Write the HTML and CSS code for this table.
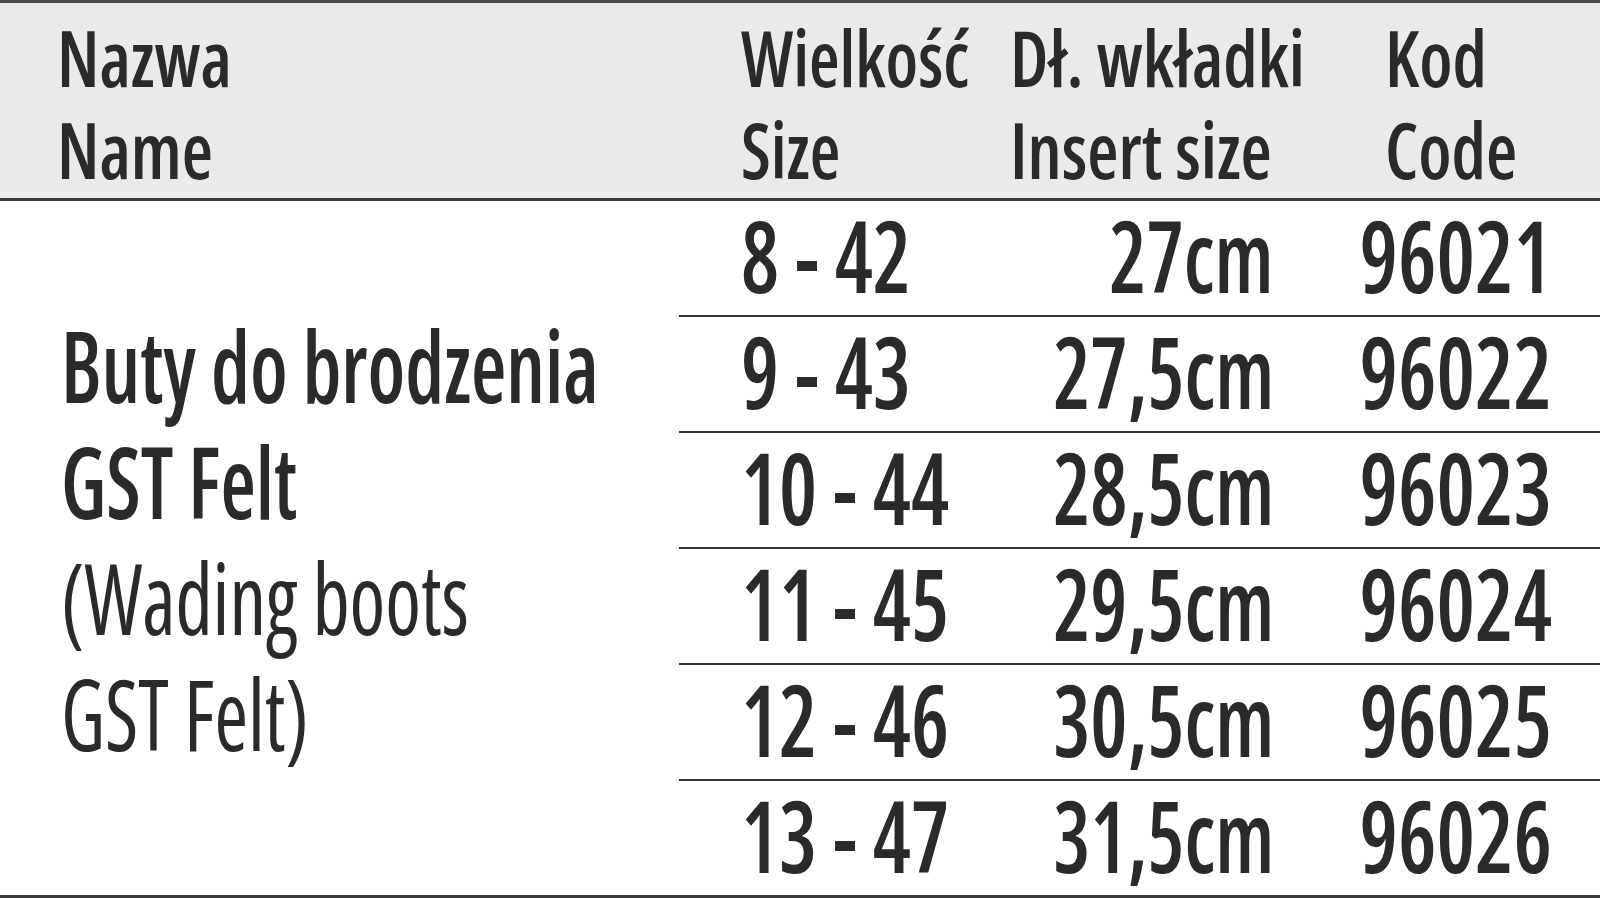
FILE: index.html
```html
<!DOCTYPE html>
<html lang="pl">
<head>
<meta charset="utf-8">
<title>Buty do brodzenia GST Felt</title>
<link rel="stylesheet" href="styles.css">
</head>
<body>
<div class="sheet">
  <div class="head">
    <div class="hc hc-name"><span class="sq">Nazwa</span><span class="sq">Name</span></div>
    <div class="hc hc-size"><span class="sq">Wielkość</span><span class="sq">Size</span></div>
    <div class="hc hc-ins"><span class="sq">Dł. wkładki</span><span class="sq">Insert size</span></div>
    <div class="hc hc-code"><span class="sq">Kod</span><span class="sq">Code</span></div>
  </div>
  <div class="rows">
    <div class="namecell">
      <span class="nl bold"><span class="sq">Buty do brodzenia</span></span>
      <span class="nl bold"><span class="sq">GST Felt</span></span>
      <span class="nl light"><span class="sq">(Wading boots</span></span>
      <span class="nl light"><span class="sq">GST Felt)</span></span>
    </div>

    <div class="c size"><span class="sq">8 - 42</span></div>
    <div class="c ins"><span class="sq">27cm</span></div>
    <div class="c code"><span class="sq">96021</span></div>

    <div class="c size"><span class="sq">9 - 43</span></div>
    <div class="c ins"><span class="sq">27,5cm</span></div>
    <div class="c code"><span class="sq">96022</span></div>

    <div class="c size"><span class="sq">10 - 44</span></div>
    <div class="c ins"><span class="sq">28,5cm</span></div>
    <div class="c code"><span class="sq">96023</span></div>

    <div class="c size"><span class="sq">11 - 45</span></div>
    <div class="c ins"><span class="sq">29,5cm</span></div>
    <div class="c code"><span class="sq">96024</span></div>

    <div class="c size"><span class="sq">12 - 46</span></div>
    <div class="c ins"><span class="sq">30,5cm</span></div>
    <div class="c code"><span class="sq">96025</span></div>

    <div class="c size last"><span class="sq">13 - 47</span></div>
    <div class="c ins last"><span class="sq">31,5cm</span></div>
    <div class="c code last"><span class="sq">96026</span></div>
  </div>
</div>
</body>
</html>
```
FILE: styles.css
```css
html, body {
  margin: 0;
  padding: 0;
  background: #ffffff;
}

.sheet {
  width: 1600px;
  height: 898px;
  color: #2a2a2a;
  font-family: "Open Sans", "DejaVu Sans Condensed", sans-serif;
  font-stretch: 75%;
}

.sq {
  display: inline-block;
  white-space: nowrap;
  transform-origin: left center;
}

/* ---------- header ---------- */
.head {
  box-sizing: border-box;
  height: 201px;
  background: #e9eaea;
  border-top: 3px solid #4a4a4a;
  border-bottom: 3px solid #3a3a3a;
  padding-top: 8px;
  display: grid;
  grid-template-columns: 679px 331px 280px 310px;
  font-size: 78px;
  line-height: 92px;
  font-weight: 600;
}

.hc {
  display: flex;
  flex-direction: column;
  align-items: flex-start;
}

.hc .sq {
  transform: scaleX(0.92);
}

.hc-name { padding-left: 57px; }
.hc-size { padding-left: 62px; }
.hc-size .sq { transform: scaleX(0.90); }
.hc-ins { padding-left: 0; }
.hc-code { padding-left: 95px; }

/* ---------- body rows ---------- */
.rows {
  box-sizing: border-box;
  height: 697px;
  border-bottom: 3px solid #3a3a3a;
  display: grid;
  grid-template-columns: 679px 331px 280px 310px;
  grid-template-rows: repeat(5, 116px) 114px;
  font-size: 99px;
  font-weight: 600;
}

.namecell {
  grid-column: 1;
  grid-row: 1 / 7;
  padding-top: 106px;
  padding-left: 61px;
  display: flex;
  flex-direction: column;
  line-height: 116px;
}

.nl .sq {
  transform: scaleX(0.82);
}

.nl.bold { font-weight: 600; }
.nl.light { font-weight: 400; }

.c {
  height: 114px;
  line-height: 107px;
  border-bottom: 2px solid #333333;
}

.c.last {
  border-bottom: 0;
}

.c .sq {
  transform: scaleX(0.86);
}

.size {
  padding-left: 62px;
}

.ins {
  text-align: right;
  padding-right: 16px;
}

.ins .sq {
  transform-origin: right center;
  transform: scaleX(0.84);
}

.code {
  text-align: center;
  padding-left: 22px;
}

.code .sq {
  transform-origin: center center;
  transform: scaleX(0.87);
}
```
